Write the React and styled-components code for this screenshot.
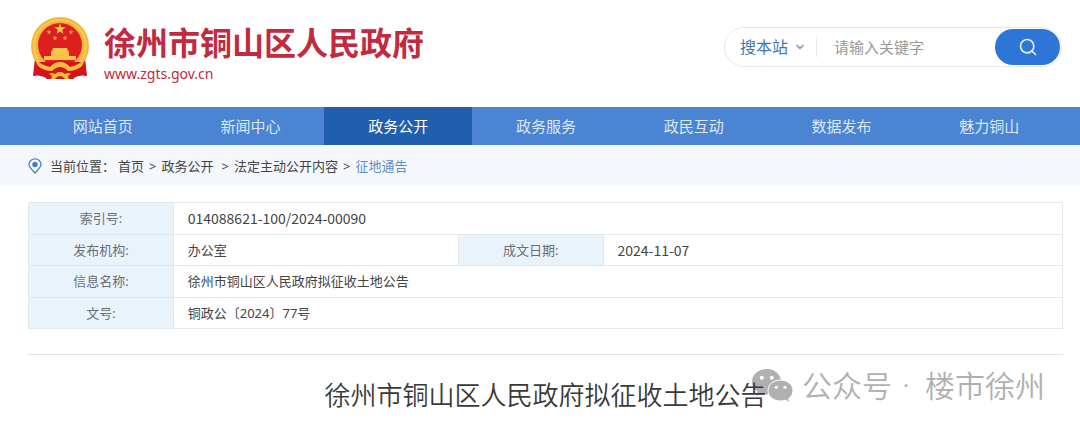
import styled, { createGlobalStyle } from "styled-components";
import { ChevronDown, Search } from "lucide-react";

const navItems = [
  "网站首页",
  "新闻中心",
  "政务公开",
  "政务服务",
  "政民互动",
  "数据发布",
  "魅力铜山",
];

const Emblem = () => (
  <svg width="60" height="66" viewBox="0 0 60 66" aria-hidden="true">
    <path d="M5 42 L55 42 L57 60 Q48 58 43 63 L17 63 Q12 58 3 60 Z" fill="#d3141b" />
    <circle cx="30" cy="30" r="29" fill="#f3b63a" />
    <circle cx="30" cy="30" r="26" fill="none" stroke="#f8c95a" strokeWidth="2" />
    <circle cx="30" cy="29" r="22" fill="#dc1f1f" />
    <path
      d="M30 7 L31.300 11.200 L35.700 11.200 L32.200 13.800 L33.500 18 L30 15.400 L26.500 18 L27.800 13.800 L24.300 11.200 L28.700 11.200 Z"
      fill="#fbc64b"
    />
    {[
      [19, 16],
      [41, 16],
      [25, 22],
      [35, 22],
    ].map(([x, y]) => (
      <path
        key={`${x}-${y}`}
        d="M0 -2.400 L.7 -.7 L2.400 -.7 L1 .5 L1.500 2.200 L0 1.200 L-1.500 2.200 L-1 .5 L-2.400 -.7 L-.7 -.7 Z"
        transform={`translate(${x} ${y})`}
        fill="#f6a935"
      />
    ))}
    <path d="M23 32 H37 L38 35 H22 Z" fill="#fbc64b" />
    <path d="M21 35 H39 V40 H46 V44 H14 V40 H21 Z" fill="#f9c24a" />
    <path d="M9 46 H51 L50 60 L10 60 Z" fill="#d3141b" />
    <path
      d="M5 43 Q11 49 20 51 Q24 46 30 46 Q36 46 40 51 Q49 49 55 43 L52 50 Q46 55 38 55 Q34 51 30 51 Q26 51 22 55 Q14 55 8 50 Z"
      fill="#f7bd42"
    />
    <path d="M19 58 Q22 56 25 58 L28 56 H32 L35 58 Q38 56 41 58 L38 60 L39 63 H35 Q33 60 30 60 Q27 60 25 63 H21 L22 60 Z" fill="#f3b63a" />
  </svg>
);

const Pin = () => (
  <svg width="14" height="16" viewBox="0 0 14 16" aria-hidden="true">
    <path
      d="M7 15 C4 11.500 1 9.500 1 6.500 A6 5.700 0 0 1 13 6.500 C13 9.500 10 11.500 7 15 Z"
      fill="#fff"
      stroke="#4a80c4"
      strokeWidth="1.300"
    />
    <circle cx="7" cy="6.500" r="2.700" fill="#3f7cc9" />
  </svg>
);

const ChatBubbles = () => (
  <svg width="42" height="34" viewBox="0 0 42 34" aria-hidden="true">
    <path
      d="M15 0 C6.500 0 0 5.700 0 12.800 C0 16.800 2.200 20.300 5.600 22.600 L4.200 27 L9.300 24.500 C11 25 13 25.400 15 25.400 C23.500 25.400 29 20 29 12.800 C29 5.700 23 0 15 0 Z"
      fill="#b0b0b0"
    />
    <circle cx="9.800" cy="8.700" r="2" fill="#fff" />
    <circle cx="19.800" cy="8.700" r="2" fill="#fff" />
    <path
      d="M28.500 11 C35.500 11 41 15.600 41 21.600 C41 25 39.300 27.800 36.600 29.700 L37.700 33.400 L33.400 31.200 C31.900 31.700 30.300 32 28.500 32 C21.500 32 16 27.500 16 21.600 C16 15.600 21.500 11 28.500 11 Z"
      fill="#b0b0b0"
      stroke="#fff"
      strokeWidth="1"
    />
    <circle cx="24.300" cy="18.300" r="1.600" fill="#fff" />
    <circle cx="33" cy="18.300" r="1.600" fill="#fff" />
  </svg>
);

const App = () => {
  return (
    <>
      <GlobalStyle />
      <Header>
        <Brand href="#">
          <Emblem />
          <BrandText>
            <SiteName>徐州市铜山区人民政府</SiteName>
            <SiteUrl>www.zgts.gov.cn</SiteUrl>
          </BrandText>
        </Brand>
        <SearchForm onSubmit={(e) => e.preventDefault()}>
          <Scope aria-label="搜索范围">
            <option>搜本站</option>
          </Scope>
          <ChevronDown size={12} strokeWidth={3} color="#5b9bd0" />
          <SearchInput aria-label="关键字" placeholder="请输入关键字" />
          <SearchButton aria-label="搜索">
            <Search size={20} strokeWidth={2} />
          </SearchButton>
        </SearchForm>
      </Header>
      <NavBar>
        {navItems.map((item) => (
          <NavLink key={item} href="#" $active={item === "政务公开"}>
            {item}
          </NavLink>
        ))}
      </NavBar>
      <Breadcrumb aria-label="当前位置">
        <Pin />
        <CrumbLabel>当前位置：</CrumbLabel>
        <Crumb href="#">首页</Crumb>
        <Separator>&gt;</Separator>
        <Crumb href="#">政务公开</Crumb>
        <Separator $wide>&gt;</Separator>
        <Crumb href="#">法定主动公开内容</Crumb>
        <Separator>&gt;</Separator>
        <Crumb href="#" $current>
          征地通告
        </Crumb>
      </Breadcrumb>
      <Main>
        <InfoTable>
          <colgroup>
            <LabelCol />
            <ValueCol />
            <LabelCol />
            <col />
          </colgroup>
          <tbody>
            <tr>
              <Label scope="row">索引号:</Label>
              <Value colSpan={3} $numeric>
                014088621-100/2024-00090
              </Value>
            </tr>
            <tr>
              <Label scope="row">发布机构:</Label>
              <Value>办公室</Value>
              <Label scope="row">成文日期:</Label>
              <Value $numeric>2024-11-07</Value>
            </tr>
            <tr>
              <Label scope="row">信息名称:</Label>
              <Value colSpan={3}>徐州市铜山区人民政府拟征收土地公告</Value>
            </tr>
            <tr>
              <Label scope="row">文号:</Label>
              <Value colSpan={3}>铜政公〔2024〕77号</Value>
            </tr>
          </tbody>
        </InfoTable>
        <Article>
          <Title>徐州市铜山区人民政府拟征收土地公告</Title>
          <Watermark>
            <ChatBubbles />
            <WatermarkText>
              <span>公众号</span>
              <Dot>·</Dot>
              <span>楼市徐州</span>
            </WatermarkText>
          </Watermark>
        </Article>
      </Main>
    </>
  );
};

const GlobalStyle = createGlobalStyle`
  * {
    box-sizing: border-box;
  }
  body {
    margin: 0;
    background: #fff;
    color: #444;
    font-family: "Noto Sans", "Noto Sans CJK SC", sans-serif;
    font-size: 13px;
    line-height: 20px;
  }
  a {
    color: inherit;
    text-decoration: none;
  }
`;

const Header = styled.header`
  display: flex;
  justify-content: space-between;
  align-items: flex-start;
  height: 107px;
  padding: 16px 18px 0 30px;
`;

const Brand = styled.a`
  display: flex;
  gap: 14px;
  color: #c22a40;
`;

const BrandText = styled.div`
  display: flex;
  flex-direction: column;
  gap: 4px;
  padding-top: 6px;
`;

const SiteName = styled.span`
  font-family: "Noto Sans CJK SC", sans-serif;
  font-size: 32px;
  line-height: 38px;
  font-weight: bold;
`;

const SiteUrl = styled.span`
  font-size: 14px;
  line-height: 20px;
`;

const SearchForm = styled.form`
  display: flex;
  align-items: center;
  width: 338px;
  height: 40px;
  margin-top: 11px;
  padding: 0 1px 0 15px;
  border: 1px solid #e6e8ea;
  border-radius: 20px;
`;

const Scope = styled.select`
  appearance: none;
  width: 54px;
  padding: 0;
  border: 0;
  background: none;
  color: #3f76ba;
  font-family: inherit;
  font-size: 16px;
  line-height: 24px;
`;

const SearchInput = styled.input`
  flex: 1;
  min-width: 0;
  margin-left: 10px;
  padding: 0 0 0 17px;
  border: 0;
  border-left: 1px solid #e6e8ea;
  background: none;
  color: #444;
  font-family: inherit;
  font-size: 15px;
  line-height: 20px;
  &::placeholder {
    color: #999;
  }
`;

const SearchButton = styled.button`
  display: flex;
  justify-content: center;
  align-items: center;
  width: 65px;
  height: 36px;
  padding: 0;
  border: 0;
  border-radius: 18px;
  background: #2e75d8;
  color: #e3eefb;
  cursor: pointer;
`;

const NavBar = styled.nav`
  display: flex;
  padding: 0 17px 0 29px;
  background: #4a84d3;
`;

const NavLink = styled.a`
  flex: 1;
  background: ${(props) => (props.$active ? "#205eae" : "transparent")};
  color: ${(props) => (props.$active ? "#fff" : "#dce8f7")};
  font-size: 15px;
  line-height: 38px;
  text-align: center;
`;

const Breadcrumb = styled.nav`
  display: flex;
  align-items: center;
  height: 41px;
  padding: 0 28px;
  background: #f4f8fd;
`;

const CrumbLabel = styled.span`
  margin: 0 3px 0 8px;
`;

const Crumb = styled.a`
  color: ${(props) => (props.$current ? "#5a8fc8" : "#444")};
`;

const Separator = styled.span`
  margin: 0 5px 0 ${(props) => (props.$wide ? "8px" : "5px")};
`;

const Main = styled.main`
  padding: 16px 17px 0 28px;
`;

const InfoTable = styled.table`
  width: 100%;
  height: 127px;
  table-layout: fixed;
  border-collapse: collapse;
`;

const LabelCol = styled.col`
  width: 14%;
`;

const ValueCol = styled.col`
  width: 285px;
`;

const Label = styled.th`
  padding: 0;
  border: 1px solid #dfe8ea;
  background: #e9f3fc;
  color: #6b6f75;
  font-weight: normal;
`;

const Value = styled.td`
  padding: 0 14px;
  border: 1px solid #e3e9e9;
  font-family: ${(props) =>
    props.$numeric ? '"Noto Sans CJK SC", sans-serif' : "inherit"};
  font-size: ${(props) => (props.$numeric ? "14px" : "13px")};
`;

const Article = styled.article`
  position: relative;
  margin-top: 25px;
  padding: 20px 0 16px;
  border-top: 1px solid #e4e4e4;
`;

const Title = styled.h1`
  position: relative;
  z-index: 1;
  margin: 0;
  color: #3a3a3a;
  font-family: "Noto Sans CJK SC", sans-serif;
  font-size: 26px;
  line-height: 38px;
  font-weight: 350;
  text-align: center;
`;

const Watermark = styled.div`
  position: absolute;
  top: 14px;
  right: 18px;
  display: flex;
  gap: 8px;
`;

const WatermarkText = styled.div`
  display: flex;
  color: #b0b0b0;
  font-family: "Noto Sans CJK SC", sans-serif;
  font-size: 30px;
  line-height: 30px;
  font-weight: 350;
`;

const Dot = styled.span`
  width: 33px;
  padding-right: 5px;
  font-family: "Noto Sans", sans-serif;
  text-align: center;
`;

export default App;
